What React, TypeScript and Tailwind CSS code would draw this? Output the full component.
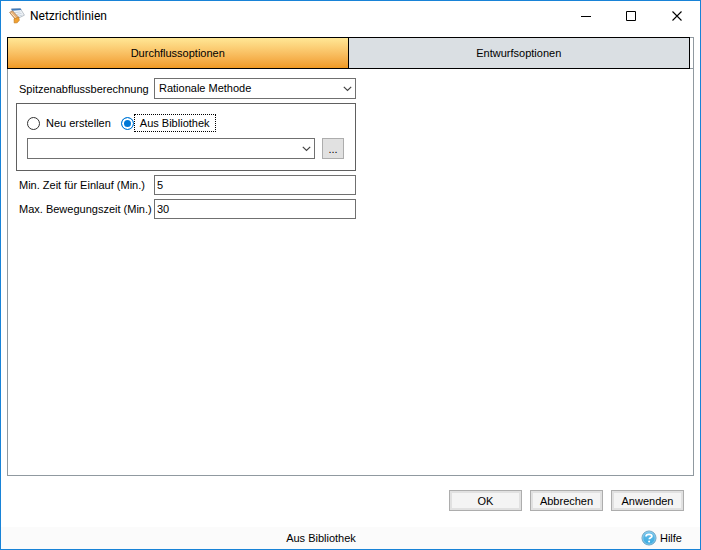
import { useState } from "react";
import type { ReactNode } from "react";

function NotesIcon() {
  return (
    <svg viewBox="0 0 16 16" className="h-4 w-4 shrink-0" aria-hidden="true">
      <path d="M2.4 1 11.4.6l4 6.6-6.6 3.2z" fill="#f4f7fa" stroke="#a9b2bb" strokeWidth=".8" />
      <path d="M2.2.8 11.6.5l.7 1.5-9.2.8z" fill="#3f7bbd" />
      <path d="m6 4.6 5.6-.7M8 6.4l4.6-1M9.4 8.2l4-1.2" stroke="#b9c6d3" strokeWidth=".7" />
      <path d="m.6 4.4 2.8-1.6 6.4 6.6-2.8 2.8z" fill="#e9b277" stroke="#a0714a" strokeWidth=".7" />
      <path d="m2 4.8 5.6 6" stroke="#fbe3c0" strokeWidth="1" />
      <path d="m5 10.8 4.6-1.6.8 3-2.2 2.6-3 .2z" fill="#f0a030" stroke="#bd7820" strokeWidth=".6" />
    </svg>
  );
}

function HelpIcon() {
  return (
    <svg viewBox="0 0 16 16" className="h-4 w-4 shrink-0" aria-hidden="true">
      <defs>
        <linearGradient id="help" x1="0" y1="0" x2="0" y2="1">
          <stop offset="0" stopColor="#6fc0ea" />
          <stop offset="1" stopColor="#35a9e0" />
        </linearGradient>
      </defs>
      <circle cx="8" cy="8" r="7" fill="url(#help)" stroke="#6b9fbe" />
      <circle cx="8" cy="8" r="6.2" fill="none" stroke="#a8dcf5" strokeWidth=".6" />
      <path d="M5 6.6C5 4.9 6.2 4.3 8 4.3s2.9.7 2.9 2c0 1.5-2.6 1.4-2.7 3" fill="none" stroke="#fff" strokeWidth="1.7" />
      <circle cx="8.1" cy="11.4" r="1" fill="#fff" />
    </svg>
  );
}

function Combo({ id, label, options }: { id: string; label?: string; options: string[] }) {
  return (
    <div className="grid min-w-0 flex-1 items-center">
      <select
        id={id}
        aria-label={label}
        className="col-start-1 row-start-1 h-[21px] w-full appearance-none border border-[#707070] bg-white px-1 pb-px leading-4 outline-none"
      >
        {options.map((o) => (
          <option key={o}>{o}</option>
        ))}
      </select>
      <svg
        viewBox="0 0 9 6"
        className="pointer-events-none col-start-1 row-start-1 mr-1 h-1.5 w-[9px] justify-self-end"
        aria-hidden="true"
      >
        <path d="m.8.8 3.7 3.7L8.2.8" fill="none" stroke="#444" strokeWidth="1.2" />
      </svg>
    </div>
  );
}

function NumberRow({ id, label, value }: { id: string; label: string; value: string }) {
  return (
    <div className="flex items-center">
      <label htmlFor={id} className="w-[138px] shrink-0 pl-[3px] whitespace-nowrap">
        {label}
      </label>
      <input
        id={id}
        type="text"
        defaultValue={value}
        className="h-5 min-w-0 flex-1 border border-[#707070] bg-white px-0.5 leading-4 outline-none"
      />
    </div>
  );
}

function Choice({ id, checked, onSelect, children }: { id: string; checked: boolean; onSelect: () => void; children: ReactNode }) {
  return (
    <div className="flex items-center">
      <input
        id={id}
        type="radio"
        name="source"
        checked={checked}
        onChange={onSelect}
        className="h-[13px] w-[13px] shrink-0 appearance-none rounded-full border border-[#333] bg-white checked:border-[#0078d7] checked:bg-[#0078d7] checked:shadow-[inset_0_0_0_2px_white]"
      />
      <label
        htmlFor={id}
        className={
          checked
            ? "border border-dotted border-black px-[5px] whitespace-nowrap"
            : "border border-transparent px-[5px] whitespace-nowrap"
        }
      >
        {children}
      </label>
    </div>
  );
}

function DialogButton({ children }: { children: ReactNode }) {
  return (
    <button
      type="button"
      className="h-[21px] w-[73px] border border-[#adadad] bg-[#f4f4f4] leading-4 shadow-[inset_0_0_0_2px_#e1e1e1]"
    >
      {children}
    </button>
  );
}

export default function App() {
  const [source, setSource] = useState("library");
  return (
    <div className="flex min-h-screen flex-col border border-[#1883d7] bg-white font-['Liberation_Sans',Arial,sans-serif] text-[11px] leading-4 text-black">
      <header className="flex h-[30px] items-center pl-2">
        <NotesIcon />
        <h1 className="ml-[5px] flex-1 font-[Roboto,sans-serif] text-xs">Netzrichtlinien</h1>
        <button type="button" aria-label="Minimieren" className="flex h-full w-[45px] items-center justify-center">
          <svg viewBox="0 0 11 11" className="h-[11px] w-[11px]">
            <path d="M0 5.5h10" stroke="#000" />
          </svg>
        </button>
        <button type="button" aria-label="Maximieren" className="flex h-full w-[45px] items-center justify-center">
          <svg viewBox="0 0 11 11" className="h-[11px] w-[11px]">
            <path d="M.5.5h9v9h-9z" fill="none" stroke="#000" />
          </svg>
        </button>
        <button type="button" aria-label="Schließen" className="flex h-full w-[46px] items-center justify-center">
          <svg viewBox="0 0 11 11" className="h-[11px] w-[11px]">
            <path d="m.5.5 9 9m0-9-9 9" stroke="#000" strokeWidth="1.1" />
          </svg>
        </button>
      </header>

      <main className="mx-1.5 mt-1.5 flex flex-1 flex-col border border-[#9099a0]">
        <div className="-mt-px -ml-px border-b border-[#9099a0] pr-[3px]">
          <div role="tablist" className="-mb-px grid grid-cols-2 border border-black">
            <button
              type="button"
              role="tab"
              aria-selected="true"
              className="h-[30px] border-r border-black bg-linear-to-b from-[#ffe795] to-[#f09a22]"
            >
              Durchflussoptionen
            </button>
            <button type="button" role="tab" aria-selected="false" className="h-[30px] bg-[#dadfe3]">
              Entwurfsoptionen
            </button>
          </div>
        </div>

        <form className="flex w-[348px] flex-col gap-1 pt-[9px] pl-2">
          <div className="flex items-center">
            <label htmlFor="method" className="w-[138px] shrink-0 pl-[3px] whitespace-nowrap">
              Spitzenabflussberechnung
            </label>
            <Combo id="method" options={["Rationale Methode"]} />
          </div>

          <div className="flex flex-col gap-1.5 border border-[#606060] pt-2.5 pr-[11px] pb-[11px] pl-2.5">
            <div role="radiogroup" aria-label="Quelle" className="flex gap-1">
              <Choice id="new" checked={source === "new"} onSelect={() => setSource("new")}>
                Neu erstellen
              </Choice>
              <Choice id="library" checked={source === "library"} onSelect={() => setSource("library")}>
                Aus Bibliothek
              </Choice>
            </div>
            <div className="flex items-center gap-[7px]">
              <Combo id="entry" label="Bibliothekseintrag" options={[""]} />
              <button type="button" className="h-[21px] w-[22px] border border-[#adadad] bg-[#e1e1e1] leading-4">
                ...
              </button>
            </div>
          </div>

          <NumberRow id="inlet" label="Min. Zeit für Einlauf (Min.)" value="5" />
          <NumberRow id="travel" label="Max. Bewegungszeit (Min.)" value="30" />
        </form>
      </main>

      <div className="flex justify-end gap-2 pt-3.5 pr-4 pb-4">
        <DialogButton>OK</DialogButton>
        <DialogButton>Abbrechen</DialogButton>
        <DialogButton>Anwenden</DialogButton>
      </div>

      <footer className="flex h-[22px] items-center bg-[#fbfbfb] pr-[18px]">
        <span className="flex-1 text-center">Aus Bibliothek</span>
        <a href="#hilfe" className="flex items-center gap-[3px]">
          <HelpIcon />
          Hilfe
        </a>
      </footer>
    </div>
  );
}
